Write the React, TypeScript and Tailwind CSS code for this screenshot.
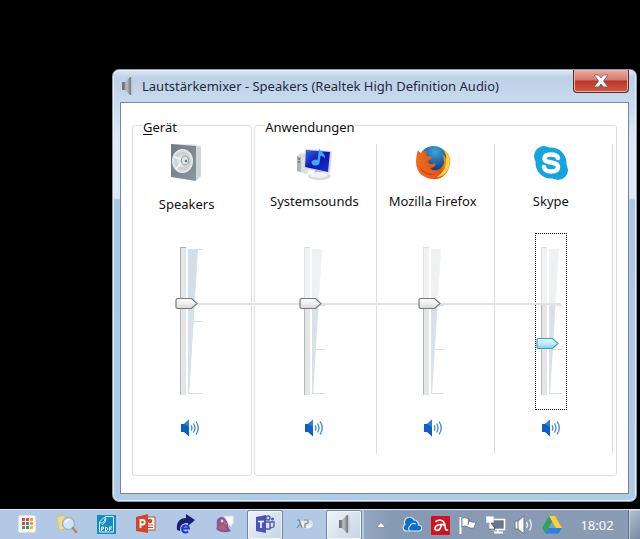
import React, { useState } from 'react';

interface Channel {
  id: string;
  name: string;
  level: number;
  icon: React.ReactNode;
}

interface TaskItem {
  name: string;
  active?: boolean;
  icon: React.ReactNode;
}

const SpeakerBoxIcon = () => (
  <svg width="36" height="40" viewBox="0 0 36 40" aria-hidden="true">
    <defs>
      <linearGradient id="boxFront" x1="0" y1="0" x2="1" y2="1">
        <stop offset="0" stopColor="#6f7b83" />
        <stop offset="1" stopColor="#8b979e" />
      </linearGradient>
      <radialGradient id="cone">
        <stop offset="0" stopColor="#a9b1b6" />
        <stop offset="0.3" stopColor="#e4e8ea" />
        <stop offset="0.7" stopColor="#c8ced2" />
        <stop offset="1" stopColor="#eef1f2" />
      </radialGradient>
    </defs>
    <path d="M2 1 26 1 32 3 32 33 27 38Z" fill="#e6ebef" />
    <path d="M27 3 32 4 32 33 27 37Z" fill="#cdd5dc" />
    <path d="M2 1 27 3 27 38 2 34Z" fill="url(#boxFront)" />
    <ellipse cx="13.500" cy="18" rx="10.500" ry="12" fill="url(#cone)" />
    <path d="M14 17 5 14M13 19 7 26" stroke="#f6f8f9" strokeWidth="1.500" />
    <ellipse cx="16" cy="17.500" rx="3.500" ry="4.500" fill="#dfe3e6" stroke="#8f999f" />
    <circle cx="17" cy="18" r="1.200" fill="#6b757c" />
  </svg>
);

const ComputerIcon = () => (
  <svg width="38" height="36" viewBox="0 0 38 36" aria-hidden="true">
    <defs>
      <linearGradient id="screen" x1="0" y1="0" x2="1" y2="1">
        <stop offset="0" stopColor="#3c62dd" />
        <stop offset="0.5" stopColor="#0716b4" />
        <stop offset="1" stopColor="#2333cf" />
      </linearGradient>
    </defs>
    <path d="M2 11 6 8 13 9 13 28 10 29 2 26Z" fill="#dcdedf" />
    <path d="M2 11 6 12 6 27 2 26Z" fill="#b0b4b7" />
    <path d="M3 14H5M3 17H5" stroke="#4b4f52" />
    <path d="M10 4 37 6 35 28 9 24Z" fill="#d4d9de" />
    <path d="M11 5 35 7 33 27 10 22Z" fill="url(#screen)" />
    <path d="M20 25 27 26 28 30 19 29Z" fill="#b8bcc0" />
    <ellipse cx="24.500" cy="31" rx="11.500" ry="4" fill="#d9dbdd" />
    <ellipse cx="23.500" cy="30" rx="9" ry="2.800" fill="#f2f3f4" />
    <path d="M24 3C25 7 31 8 30 14C29 11 27 11 25.500 11L24.500 18A4 3 0 1 1 22.500 15Z" fill="#3fa9f5" />
  </svg>
);

const FirefoxIcon = () => (
  <svg width="36" height="36" viewBox="0 0 36 36" aria-hidden="true">
    <defs>
      <radialGradient id="globe" cx="0.55" cy="0.2" r="0.8">
        <stop offset="0" stopColor="#3fa5d8" />
        <stop offset="0.6" stopColor="#165a9e" />
        <stop offset="1" stopColor="#0b2c66" />
      </radialGradient>
      <linearGradient id="tail" x1="0" y1="0.2" x2="1" y2="0">
        <stop offset="0" stopColor="#ec6b1a" />
        <stop offset="0.6" stopColor="#e6511a" />
        <stop offset="0.85" stopColor="#f79a1c" />
        <stop offset="1" stopColor="#ffd83c" />
      </linearGradient>
    </defs>
    <circle cx="18.500" cy="15" r="14" fill="url(#globe)" />
    <path d="M3 5C4 7 5 7 6 8C8 6 10 6 12 6C11 8 11 10 12 11C14 11 16 11 17 12C17 14 14 15 13 16C13 18 14 19 16 19C18 19 19 18 21 19C20 22 17 23 15 23C20 28 28 24 29 17C29 14 28 11 27 9C30 11 31 13 31 15C32 12 30 7 28 4C35 8 37 16 34 23C31 31 25 35 17 34C8 33 1 27 1 17C1 12 2 8 3 5Z" fill="url(#tail)" />
    <path d="M31 15C32 12 31 9 29 5C35 11 36 18 33 24C30 30 26 32 22 32C29 27 31 22 31 15Z" fill="#ffd23a" />
    <path d="M4 20C6 28 14 32 22 29C18 30 8 29 4 20Z" fill="#c63a12" />
  </svg>
);

const SkypeIcon = () => (
  <svg width="36" height="36" viewBox="0 0 36 36" aria-hidden="true">
    <circle cx="11" cy="11" r="10" fill="#12a5e0" />
    <circle cx="25" cy="25" r="10" fill="#12a5e0" />
    <circle cx="18" cy="18" r="15.500" fill="#12a5e0" />
    <path d="M25 13C24 10 21 9.500 18 9.500C14 9.500 11.500 11 11.500 13.500C11.500 19 25 16 25 22C25 25 22 26.500 18 26.500C14 26.500 11.500 25 11 22" fill="none" stroke="#fff" strokeWidth="4.500" strokeLinecap="round" />
  </svg>
);

const GreySpeaker = () => (
  <svg width="14" height="20" viewBox="0 0 14 20" aria-hidden="true">
    <defs>
      <linearGradient id="horn" x1="0" x2="1">
        <stop offset="0" stopColor="#6b7277" />
        <stop offset="0.6" stopColor="#b9bec1" />
        <stop offset="1" stopColor="#80878b" />
      </linearGradient>
    </defs>
    <path d="M2 6H5L10 1V19L5 14H2Z" fill="url(#horn)" />
    <path d="M2 6H4.500V14H2Z" fill="#6d7479" />
    <path d="M10.500 1V19" stroke="#7d8488" strokeWidth="1.500" />
    <path d="M12 2V18" stroke="#c0c6ca" />
  </svg>
);

const VolumeIcon = () => (
  <svg width="20" height="18" viewBox="0 0 20 18" aria-hidden="true">
    <path d="M1 5H4L9 0.500V17.500L4 13H1Z" fill="#0c5fc4" />
    <path d="M4 5 9 1V8Z" fill="#2f7fd9" />
    <path d="M11 6.500Q13 9 11 11.500M13.500 4.500Q16.500 9 13.500 13.500M16 2.500Q20.500 9 16 15.500" fill="none" stroke="#3f86c8" strokeWidth="1.300" />
  </svg>
);

const device: Channel = { id: 'speakers', name: 'Speakers', level: 62, icon: <SpeakerBoxIcon /> };

const apps: Channel[] = [
  { id: 'system', name: 'Systemsounds', level: 62, icon: <ComputerIcon /> },
  { id: 'firefox', name: 'Mozilla Firefox', level: 62, icon: <FirefoxIcon /> },
  { id: 'skype', name: 'Skype', level: 35, icon: <SkypeIcon /> },
];

const taskItems: TaskItem[] = [
  {
    name: 'Apps',
    icon: (
      <svg width="18" height="18" viewBox="0 0 18 18">
        <rect x="0.500" y="0.500" width="17" height="17" rx="1.500" fill="#fbf8f2" />
        <path d="M4 4.500H7M4 8.500H7" stroke="#e0493a" strokeWidth="3" />
        <path d="M8 4.500H11" stroke="#e0493a" strokeWidth="3" />
        <path d="M12 4.500H15M12 8.500H15" stroke="#f0a12c" strokeWidth="3" />
        <path d="M8 8.500H11" stroke="#3c7fd9" strokeWidth="3" />
        <path d="M4 12.500H7M8 12.500H11" stroke="#38a35a" strokeWidth="3" />
        <path d="M12 12.500H15" stroke="#e8c02d" strokeWidth="3" />
      </svg>
    ),
  },
  {
    name: 'Suche',
    icon: (
      <svg width="22" height="20" viewBox="0 0 22 20">
        <path d="M1 3 7 1 9 3H17V14L3 16Z" fill="#f1dd86" stroke="#d9c26a" />
        <circle cx="12.500" cy="9.500" r="6" fill="#cfe6f7" stroke="#9db4c8" strokeWidth="1.500" />
        <path d="M9.500 8.500Q10.500 5.500 13.500 5.500" fill="none" stroke="#fff" strokeWidth="1.500" />
        <path d="M17 14 20 18" stroke="#b58a63" strokeWidth="2.500" strokeLinecap="round" />
      </svg>
    ),
  },
  {
    name: 'PDF',
    icon: (
      <svg width="19" height="19" viewBox="0 0 19 19">
        <rect width="19" height="19" fill="#0e8fc0" />
        <path d="M2.500 17V7L8 1.500H16.500V17ZM3 8C7 8 8 6 8 2M5 10Q9 8 9 3" fill="none" stroke="#d9f1fa" />
        <path d="M4.500 16V12H6.500V14H4.500M8.500 12V16L10.500 15V13ZM12.500 16V12H15M12.500 14H14.500" fill="none" stroke="#fff" />
      </svg>
    ),
  },
  {
    name: 'PowerPoint',
    icon: (
      <svg width="20" height="20" viewBox="0 0 20 20">
        <rect x="10" y="3" width="9" height="13" fill="#fff" stroke="#d24726" />
        <circle cx="14" cy="7" r="2.300" fill="#d24726" />
        <path d="M12 11H17M12 13.500H17" stroke="#d24726" />
        <path d="M0 3 12 0V19L0 17Z" fill="#d24726" />
        <path d="M4.500 14V6H6.500A2.200 2.200 0 0 1 6.500 10.500H4.500" fill="none" stroke="#fff" strokeWidth="1.800" />
      </svg>
    ),
  },
  {
    name: 'Browser',
    icon: (
      <svg width="20" height="20" viewBox="0 0 20 20">
        <path d="M1 16C0 8 4 4 10 4V0L19 6 12 12V9C6 9 4 11 4 17Z" fill="#17206f" />
        <path d="M6.500 14.500H13A3.500 3.500 0 1 0 12 17.500" fill="none" stroke="#1b33e0" strokeWidth="2" />
      </svg>
    ),
  },
  {
    name: 'Pidgin',
    icon: (
      <svg width="20" height="18" viewBox="0 0 20 18">
        <path d="M9 1H18.500V9H17L16 12 13 9H9Z" fill="#f7f7fa" stroke="#d4d8e2" />
        <path d="M1 14C3 12 1 9 2 5C4 1 10 1 11 5C14 8 12 12 16 16C11 18 5 18 1 14Z" fill="#8a5896" />
        <path d="M4 14Q3 10 7 9Q11 11 11 15Q8 16 4 14Z" fill="#b8616b" />
        <circle cx="7" cy="6" r="1.400" fill="#f1d8dc" />
        <path d="M9 7 13 8.500 9 10Z" fill="#cf6a70" />
      </svg>
    ),
  },
  {
    name: 'Teams',
    active: true,
    icon: (
      <svg width="20" height="20" viewBox="0 0 20 20">
        <circle cx="13" cy="4" r="2" fill="none" stroke="#5059b8" strokeWidth="1.400" />
        <circle cx="17.500" cy="5" r="1.500" fill="#5059b8" />
        <path d="M11 8H15V15H11M15.500 8H19V12Q18 14 15.500 13.500" fill="#dfe2f5" stroke="#5059b8" strokeWidth="1.400" />
        <path d="M1 3 11 1V19L1 17Z" fill="#4b53b4" />
        <path d="M3 7.500H9M6 7.500V14" stroke="#fff" strokeWidth="1.600" />
      </svg>
    ),
  },
  {
    name: 'Werkzeug',
    icon: (
      <svg width="18" height="12" viewBox="0 0 18 12">
        <ellipse cx="11" cy="6" rx="6" ry="4.500" fill="#dfe6ee" />
        <path d="M1 2H3L6 10M4 6 1 10M8 2H12V5L9 6V10" fill="none" stroke="#7c8796" strokeWidth="1.200" />
        <path d="M11 9 15 8M6 3 7 7" stroke="#fff" strokeWidth="1.500" />
      </svg>
    ),
  },
  { name: 'Lautstärkemixer', active: true, icon: <GreySpeaker /> },
];

const trayItems: TaskItem[] = [
  {
    name: 'OneDrive',
    icon: (
      <svg width="20" height="16" viewBox="0 0 20 16">
        <path d="M4 14A3.500 3.500 0 0 1 3 7.500A5 5 0 0 1 12 3A4.500 4.500 0 0 1 16.500 8A3 3 0 0 1 17 14Z" fill="#0b6fc6" stroke="#cfe8fb" strokeWidth="1.200" />
        <path d="M8 14A3 3 0 0 1 8 9A4 4 0 0 1 14 7" fill="none" stroke="#cfe8fb" strokeWidth="1.200" />
      </svg>
    ),
  },
  {
    name: 'Avira',
    icon: (
      <svg width="19" height="19" viewBox="0 0 19 19">
        <rect width="19" height="19" rx="1" fill="#d2121f" />
        <path d="M5 5.500C8 3 12.500 4 13.500 7.500L14.500 13Q15 14.500 16.500 14M13.500 9C9 7.500 4 9.500 4 12.500C4 15 8 15 9.500 12L10.500 8.500" fill="none" stroke="#fff" strokeWidth="1.700" strokeLinecap="round" />
      </svg>
    ),
  },
  {
    name: 'Wartungscenter',
    icon: (
      <svg width="18" height="18" viewBox="0 0 18 18">
        <path d="M1.500 1V18" stroke="#fff" strokeWidth="2" />
        <path d="M3 2Q7 1 10 3V5Q13 7 17 6L15 12Q12 13 9 11Q6 9 3 11Z" fill="#fff" stroke="#5a6575" strokeWidth="0.700" />
        <path d="M10 3 9 9" stroke="#5a6575" />
      </svg>
    ),
  },
  {
    name: 'Netzwerk',
    icon: (
      <svg width="20" height="18" viewBox="0 0 20 18">
        <rect x="5.500" y="3.500" width="13" height="10" fill="#68788b" stroke="#fff" strokeWidth="1.600" />
        <path d="M8 16.500H17M12 14V16" stroke="#fff" strokeWidth="2" />
        <path d="M1 1H6V6H5V12H9" fill="none" stroke="#4d596a" strokeWidth="3.500" />
        <path d="M1 1H7V6H1ZM4 6V12H8" fill="#fff" stroke="#fff" strokeWidth="1.500" />
      </svg>
    ),
  },
  {
    name: 'Lautstärke',
    icon: (
      <svg width="20" height="18" viewBox="0 0 20 18">
        <path d="M1 5H4L10 0V18L4 13H1Z" fill="#fff" stroke="#6b7788" />
        <path d="M4 5V13" stroke="#6b7788" />
        <path d="M12.500 6Q14.500 9 12.500 12M15.500 3.500Q19 9 15.500 14.500" fill="none" stroke="#e5ebf2" strokeWidth="1.400" />
      </svg>
    ),
  },
  {
    name: 'Google Drive',
    icon: (
      <svg width="20" height="18" viewBox="0 0 20 18">
        <path d="M7 0H13L20 12H14Z" fill="#fdd13a" />
        <path d="M7 0 10 5.500 3.500 17.500 0 12Z" fill="#2ba565" />
        <path d="M6.500 12H20L16.500 17.500H3.500Z" fill="#2f7de8" />
      </svg>
    ),
  },
];

interface VolumeSliderProps {
  channel: Channel;
  focused?: boolean;
  master?: boolean;
  onChange: (value: number) => void;
}

const VolumeSlider: React.FC<VolumeSliderProps> = ({ channel, focused, master, onChange }) => (
  <div
    className={
      focused
        ? 'relative h-[177px] w-8 border border-dotted border-black'
        : 'relative h-[177px] w-8 border border-transparent'
    }
  >
    <svg width="30" height="175" viewBox="0 0 30 175" aria-hidden="true">
      <rect x="5" y="13" width="6" height="148" fill={master ? '#e3e7e8' : '#f1f2f3'} />
      <rect x="5" y="70" width="6" height="91" fill="#e3e5e6" />
      <path d="M5.500 161V13.500H11" fill="none" stroke={master ? '#a9adaf' : '#dddfe0'} />
      <path d="M5.500 161V70" stroke="#b4b8ba" />
      <path d="M13 15H23L14 160H13Z" fill={master ? '#d5dee5' : '#eff1f2'} />
      <path d="M13 70H19.500L14 160H13Z" fill="#d9e1e8" />
      <path d={master ? 'M18 87.500H27M14 159.500H27M22 15.500H27' : 'M21 71.500H26M17 115.500H26M14 159.500H26'} stroke="#d9dcdf" />
    </svg>
    <div className="absolute z-10" style={{ left: 0, bottom: `${Math.round(channel.level * 1.48 + 6)}px` }}>
      <svg width="24" height="14" viewBox="0 0 24 14" aria-hidden="true">
        <defs>
          <linearGradient id={`thumb-${channel.id}`} x1="0" y1="0" x2="0" y2="1">
            <stop offset="0" stopColor={focused ? '#e2f7fd' : '#fbfbfb'} />
            <stop offset="0.5" stopColor={focused ? '#c3edfa' : '#efefef'} />
            <stop offset="1" stopColor={focused ? '#7fd0ea' : '#d6d6d6'} />
          </linearGradient>
        </defs>
        <path
          d="M2.500 1.500H16.500L22 6.500 16.500 11.500H2.500Q1 11.500 1 10V3Q1 1.500 2.500 1.500Z"
          fill={`url(#thumb-${channel.id})`}
          stroke={focused ? '#3ba3b8' : '#77797a'}
          strokeWidth="1.200"
        />
      </svg>
    </div>
    <input
      type="range"
      min={0}
      max={100}
      value={channel.level}
      aria-label={`Lautstärke ${channel.name}`}
      onChange={e => onChange(Number(e.target.value))}
      className="absolute inset-0 z-20 h-full w-full opacity-0 [direction:rtl] [writing-mode:vertical-lr]"
    />
  </div>
);

const MuteButton = ({ name }: { name: string }) => (
  <button type="button" aria-label={`Ton aus für ${name}`} className="mt-2.5 flex h-4 items-center justify-center">
    <VolumeIcon />
  </button>
);

export default function App() {
  const [levels, setLevels] = useState<Record<string, number>>({});

  const withLevel = (channel: Channel): Channel => ({
    ...channel,
    level: levels[channel.id] ?? channel.level,
  });

  const handleChange = (id: string, value: number) => {
    setLevels(prev => ({ ...prev, [id]: value }));
  };

  return (
    <div className="flex min-h-screen flex-col bg-black font-['Noto_Sans','Open_Sans',sans-serif] text-[13px] text-[#111]">
      <main className="flex-1 pt-[69px] pr-[3px] pb-[7px] pl-28">
        <section className="rounded-[7px] border border-[#8b9aab] bg-[linear-gradient(180deg,#dbe8f6_0,#bdd0e6_8px,#c9dbee_32px,#dce9f7_70px,#dce9f7_128px,#abc8e5_130px,#b0cbe7_100%)] px-[7px] pb-[7px] shadow-[inset_0_0_0_1px_#e6f1fb]">
          {/* Title bar */}
          <header className="flex h-8 items-start justify-between">
            <div className="flex items-center gap-2 pt-1.5">
              <GreySpeaker />
              <h1 className="text-[13px] leading-5 text-[#1d2b3c]">
                Lautstärkemixer - Speakers (Realtek High Definition Audio)
              </h1>
            </div>
            <button
              type="button"
              aria-label="Schließen"
              className="flex h-[23px] w-14 items-center justify-center rounded-b-[4px] border border-t-0 border-[#5c2a2c] bg-[linear-gradient(180deg,#e9aaa0_0,#d67a6c_45%,#bd3626_50%,#cf5a44_100%)] shadow-[inset_0_0_0_1px_#eab2a8]"
            >
              <svg width="16" height="14" viewBox="0 0 16 14" aria-hidden="true">
                <path d="M1 1H5.500L8 4 10.500 1H15L10.500 7 15 13H10.500L8 10 5.500 13H1L5.500 7Z" fill="#fff" stroke="#6e5a64" strokeWidth="0.800" />
              </svg>
            </button>
          </header>

          <div className="border border-[#76879b] bg-white px-[11px] pt-3 pb-[17px]">
            <div className="relative flex gap-0.5">
              <fieldset className="min-w-0 flex-1 rounded-[3px] border border-[#dcdfe0] pt-[9px] pb-[21px]">
                <legend className="ml-2.5 pt-1 text-[13px] leading-4">
                  <span className="underline underline-offset-2">G</span>erät
                </legend>
                <div className="flex h-[310px] flex-col items-center pr-[5px]">
                  <button type="button" className="flex flex-col items-center pr-1.5">
                    <span className="flex h-[38px] items-center">{device.icon}</span>
                    <span className="mt-3 leading-5">{device.name}</span>
                  </button>
                  <div className="mt-[19px]">
                    <VolumeSlider channel={withLevel(device)} master onChange={value => handleChange(device.id, value)} />
                  </div>
                  <MuteButton name={device.name} />
                </div>
              </fieldset>

              <fieldset className="min-w-0 flex-[3] rounded-[3px] border border-[#dcdfe0] px-[3px] pt-[9px] pb-[21px]">
                <legend className="ml-[7px] pt-1 text-[13px] leading-4">Anwendungen</legend>
                <div className="grid grid-cols-3">
                  {apps.map(app => (
                    <div key={app.id} className="flex h-[310px] flex-col items-center border-r border-[#dcdfe0] pr-[5px]">
                      <span className="flex h-[38px] items-center">{app.icon}</span>
                      <span className="mt-[9px] leading-5 whitespace-nowrap">{app.name}</span>
                      <div className="mt-[22px]">
                        <VolumeSlider
                          channel={withLevel(app)}
                          focused={app.id === 'skype'}
                          onChange={value => handleChange(app.id, value)}
                        />
                      </div>
                      <MuteButton name={app.name} />
                    </div>
                  ))}
                </div>
              </fieldset>

              {/* Master level guide across all channels */}
              <div className="absolute top-[188px] right-14 left-16 h-0.5 bg-[#e0e2e5]" />
            </div>
          </div>
        </section>
      </main>

      {/* Taskbar */}
      <footer className="flex h-[31px] border-t border-[#dce7f2] bg-[#b1c9e4]">
        <nav className="flex flex-1 pl-[7px]">
          {taskItems.map(item => (
            <button
              key={item.name}
              type="button"
              aria-label={item.name}
              className={
                item.active
                  ? 'mx-0.5 flex flex-1 items-center justify-center rounded-[2px] border border-[#71869f] bg-[linear-gradient(135deg,#f1f5f9,#c4d3e4)] pb-0.5 shadow-[inset_0_0_0_1px_#f1f6fb]'
                  : 'mx-0.5 flex flex-1 items-center justify-center border border-transparent pb-0.5'
              }
            >
              {item.icon}
            </button>
          ))}
        </nav>
        <div className="flex items-center bg-[linear-gradient(90deg,#95a7c0,#8699b2_30px,#8b9db5)]">
          <button type="button" aria-label="Ausgeblendete Symbole einblenden" className="flex w-[34px] justify-center">
            <svg width="10" height="6" viewBox="0 0 10 6" aria-hidden="true">
              <path d="M5 0.500 9.500 5.500H0.500Z" fill="#fff" stroke="#657489" strokeWidth="0.600" />
            </svg>
          </button>
          {trayItems.map(item => (
            <button key={item.name} type="button" aria-label={item.name} className="flex w-7 justify-center">
              {item.icon}
            </button>
          ))}
          <time className="w-[62px] text-center text-[13px] leading-5 text-white">18:02</time>
          <button
            type="button"
            aria-label="Desktop anzeigen"
            className="h-full w-3 border-l border-[#5f6f85] bg-[linear-gradient(135deg,#b5c3d4,#75879f)] shadow-[inset_1px_1px_0_#c3cfdd]"
          />
        </div>
      </footer>
    </div>
  );
}
